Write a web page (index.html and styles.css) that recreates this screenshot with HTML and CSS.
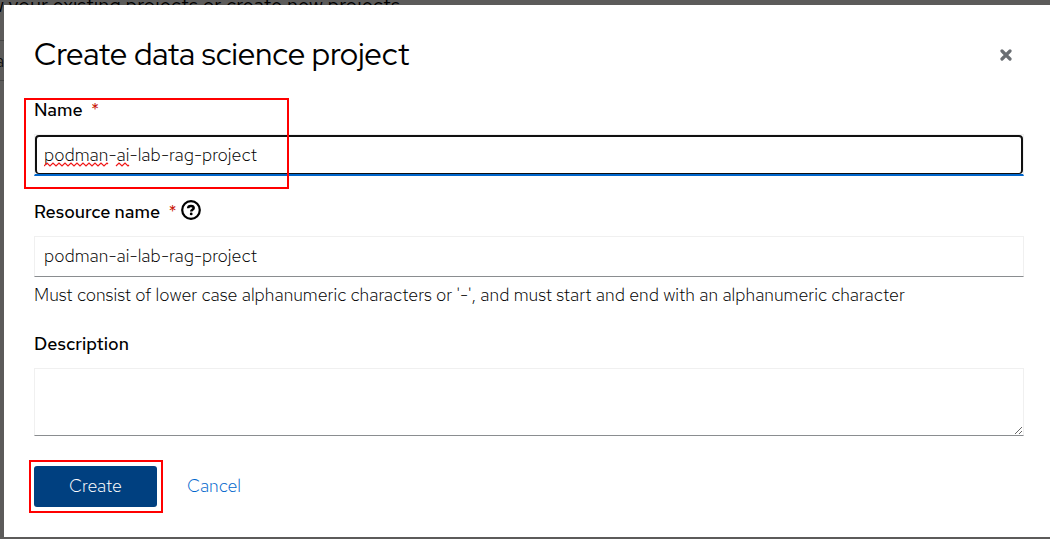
FILE: index.html
```html
<!DOCTYPE html>
<html lang="en">
<head>
<meta charset="utf-8">
<meta name="viewport" content="width=device-width, initial-scale=1">
<title>Create data science project</title>
<link rel="stylesheet" href="styles.css">
</head>
<body>
<div class="page" aria-hidden="true">
  <p class="page-intro">w your existing projects or create new projects.</p>
  <p class="page-row">a</p>
</div>
<div class="backdrop">
  <main class="modal" role="dialog" aria-labelledby="modal-title">
    <header class="modal-header">
      <h1 class="modal-title" id="modal-title">Create data science project</h1>
      <button class="close" type="button" aria-label="Close">
        <svg class="close-icon" viewBox="0 0 12 12"><path d="M2 2L10 10M10 2L2 10" fill="none" stroke="currentColor" stroke-width="3.2" stroke-linecap="round"/></svg>
      </button>
    </header>
    <form class="form">
      <div class="field highlight highlight-name">
        <label class="label" for="name">Name <span class="required">*</span></label>
        <div class="input-wrap">
          <input class="input input-focused" id="name" type="text" value="podman-ai-lab-rag-project" spellcheck="false">
          <svg class="squiggle" viewBox="0 0 90 5"><path d="M0 4l3-3 3 3 3-3 3 3 3-3 3 3 3-3 3 3 3-3 3 3 3-3 3 3 3-3 3 3 3-3 3 3 3-3 3 3 3-3 3 3 3-3 1 1M72 4l3-3 3 3 3-3 3 3 1-1" fill="none" stroke="#f01818" stroke-width="1.2"/></svg>
        </div>
      </div>
      <div class="field">
        <div class="label-row">
          <label class="label" for="resource">Resource name <span class="required">*</span></label>
          <button class="help" type="button" aria-label="More info">
            <svg class="help-icon" viewBox="0 0 20 20"><circle cx="10" cy="10" r="8.8" fill="none" stroke="currentColor" stroke-width="2.2"/><path d="M7.1 8.2C7.2 6.5 8.4 5.9 10 5.9c1.6 0 2.7.8 2.7 2.1 0 1.7-2.5 1.7-2.5 3.4" fill="none" stroke="currentColor" stroke-width="2.5"/><circle cx="10.2" cy="13.9" r="1.4" fill="currentColor"/></svg>
          </button>
        </div>
        <input class="input" id="resource" type="text" value="podman-ai-lab-rag-project" spellcheck="false" aria-describedby="resource-hint">
        <p class="hint" id="resource-hint">Must consist of lower case alphanumeric characters or '-', and must start and end with an alphanumeric character</p>
      </div>
      <div class="field">
        <label class="label" for="description">Description</label>
        <textarea class="input textarea" id="description"></textarea>
      </div>
      <div class="actions">
        <div class="highlight highlight-create"><button class="button primary" type="button">Create</button></div>
        <button class="button link" type="button">Cancel</button>
      </div>
    </form>
  </main>
</div>
</body>
</html>
```
FILE: styles.css
```css
* { box-sizing: border-box; }
body {
  margin: 0;
  color: #000;
  background: #5c5c5c;
  font: 320 18px/24px "Red Hat Text", Roboto, "Noto Sans", sans-serif;
  overflow: hidden;
}
button, input, textarea { font: inherit; color: inherit; }
p, h1 { margin: 0; }
.page {
  position: absolute;
  inset: 0;
  overflow: hidden;
  background: #5c5b5a;
  white-space: nowrap;
}
.page-intro { margin: -7px 0 0 -10px; font-size: 20px; font-weight: 400; }
.page-row {
  margin-top: 23px;
  padding: 8px 0 7px;
  border: solid #454545;
  border-width: 1px 0;
  margin-left: -5px;
}
.backdrop {
  position: relative;
  padding: 5px 0 2px 4px;
}
.modal {
  padding: 25px 26px 30px 30px;
  background: #fff;
}
.modal-header {
  display: flex;
  align-items: center;
  justify-content: space-between;
  margin-bottom: 20px;
}
.modal-title {
  font: 450 31px/48px "Red Hat Display", Roboto, sans-serif;
}
.close, .help {
  display: flex;
  padding: 0;
  border: 0;
  background: none;
}
.close { padding: 13px 12px 11px; color: #6a6e73; }
.close-icon { width: 12px; height: 12px; }
.form { display: flex; flex-direction: column; gap: 24px; }
.field { display: flex; flex-direction: column; }
.label-row { display: flex; gap: 4px; }
.label { font-weight: 500; margin-bottom: 12px; }
.required { margin-left: 4px; color: #c9190b; font-weight: 400; }
.help { height: 20px; }
.help-icon { width: 20px; height: 20px; }
.input-wrap { position: relative; display: flex; }
.input {
  width: 100%;
  height: 41px;
  padding: 0 9px 2px;
  border: 1px solid #f0f0f0;
  border-bottom-color: #8a8d90;
  border-radius: 0;
  background: #fff;
}
.input-focused {
  height: 42px;
  padding-bottom: 1px;
  border-bottom: 2px solid #06c;
}
.input-wrap::after {
  content: "";
  position: absolute;
  inset: 1px 1px 2px;
  border: 2px solid #101010;
  border-bottom-width: 1px;
  border-radius: 4px;
  pointer-events: none;
}
.input:focus { outline: none; }
.squiggle {
  position: absolute;
  left: 10px;
  top: 28px;
  width: 90px;
  height: 5px;
}
.hint { margin: 6px 0 1px; }
.textarea { display: block; height: 68px; padding: 8px; resize: vertical; }
.actions { display: flex; gap: 30px; margin-top: 6px; }
.highlight { position: relative; }
.highlight::after {
  content: "";
  position: absolute;
  z-index: 1;
  box-sizing: border-box;
  border: 2px solid #f00;
  pointer-events: none;
}
.highlight-name::after { top: 0; left: -10px; bottom: -13px; width: 265px; }
.highlight-create::after { inset: -6px -6px -6px -5px; }
.button { height: 41px; padding: 0 0 2px; border: 0; border-radius: 3px; background: none; }
.primary { padding: 0 35px 2px; background: #004080; color: #fff; }
.link { color: #06c; }
```
